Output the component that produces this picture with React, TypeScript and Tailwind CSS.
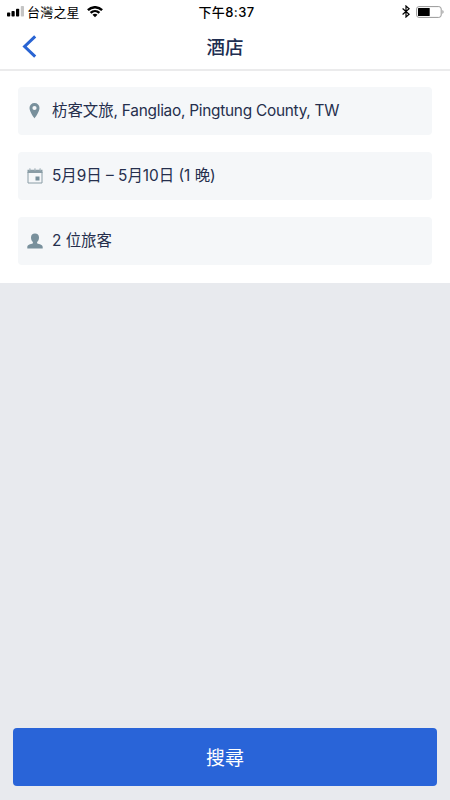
import type { ReactNode } from "react";

function StatusBar() {
  return (
    <div className="grid h-[23px] grid-cols-[1fr_auto_1fr] items-center pl-[7px] pr-[6px] text-black">
      <div className="flex items-center">
        <svg width="18" height="11" viewBox="0 0 18 11">
          <rect x="0" y="6.5" width="3.2" height="4" rx="0.8" />
          <rect x="4.5" y="5" width="3.2" height="5.5" rx="0.8" />
          <rect x="9" y="2.7" width="3.2" height="7.8" rx="0.8" />
          <rect x="13.8" y="0" width="3.2" height="10.5" rx="0.8" fill="#c4c4c4" />
        </svg>
        <span className="ml-[2px] pt-px text-[13px] leading-none tracking-[0.2px]">台灣之星</span>
        <svg className="ml-[7px]" width="16" height="12" viewBox="0 0 16 12" fill="none" stroke="#000" strokeWidth="2.4">
          <path d="M0.9 4.1C4.9 0.2 11.1 0.2 15.1 4.1" />
          <path d="M3.6 6.9C6.1 4.5 9.9 4.5 12.4 6.9" />
          <path d="M8 11.2L5.5 8.8C7 7.5 9 7.5 10.5 8.8Z" fill="#000" stroke="none" />
        </svg>
      </div>
      <span className="pl-[2px] pt-px text-[13px] font-medium leading-none tracking-[0.4px]">下午8:37</span>
      <div className="flex items-center justify-end">
        <svg width="8" height="13" viewBox="0 0 8 13" fill="none" stroke="#000" strokeWidth="1.2">
          <path d="M0.6 3.5L7.1 9.2L4 12V1L7.1 3.8L0.6 9.5" />
        </svg>
        <svg className="ml-[6px]" width="28" height="12" viewBox="0 0 28 12">
          <rect x="0.6" y="0.6" width="24.6" height="10.8" rx="2.4" fill="none" stroke="#999" strokeWidth="1" />
          <rect x="2" y="2" width="11.7" height="8" rx="0.6" />
          <path d="M26.4 4.1C28 4.6 28 7.4 26.4 7.9Z" fill="#999" />
        </svg>
      </div>
    </div>
  );
}

function Field({ icon, children }: { icon: ReactNode; children: ReactNode }) {
  return (
    <div className="flex h-12 items-center rounded bg-[#f5f7f9] pl-[9px]">
      <span className="flex w-4 shrink-0 justify-center">{icon}</span>
      <span className="ml-[9px] whitespace-nowrap text-[15.4px] leading-5 text-[#252f4d]">{children}</span>
    </div>
  );
}

export default function App() {
  return (
    <div className="flex h-[800px] w-[450px] flex-col bg-[#e8eaee] font-['Inter','Noto_Sans_CJK_TC',sans-serif]">
      <header className="h-[71px] border-b-2 border-[#ebebec] bg-white">
        <StatusBar />
        <div className="grid h-[46px] grid-cols-[1fr_auto_1fr] items-center">
          <button aria-label="返回" className="pl-[22px]">
            <svg width="15" height="23" viewBox="0 0 15 23" fill="none" stroke="#2964d3" strokeWidth="3">
              <path d="M13.2 1.3L2.6 11.5L13.2 21.7" />
            </svg>
          </button>
          <h1 className="pt-[2px] text-[18.5px] font-medium leading-none text-[#202d50]">酒店</h1>
        </div>
      </header>

      <main className="flex h-[212px] flex-col gap-[17px] bg-white px-[18px] pt-4">
        <Field
          icon={
            <svg className="mr-px" width="11" height="16" viewBox="0 0 11 16" fill="#78909c">
              <path fillRule="evenodd" d="M5.5 0A5 5 0 0 0 .5 5.1C.5 9 5.5 15.5 5.5 15.5S10.5 9 10.5 5.1A5 5 0 0 0 5.5 0ZM5.5 2.9A2.1 2.1 0 1 1 5.5 7.1A2.1 2.1 0 0 1 5.5 2.9Z" />
            </svg>
          }
        >
          枋客文旅<span className="tracking-[-0.26px]">, Fangliao, Pingtung County, TW</span>
        </Field>
        <Field
          icon={
            <svg width="16" height="16" viewBox="0 0 16 16">
              <path d="M1 4V15H15V4" fill="none" stroke="#8a9da6" strokeWidth="1" />
              <path d="M.5 1.8H2.2V.4H3.5V1.8H7.3V.4H8.6V1.8H12.5V.4H13.8V1.8H15.5V5H.5Z" fill="#8a9da6" />
              <path d="M2.8 .7V2.5M8 .7V2.5M13.2 .7V2.5" stroke="#f5f7f9" strokeWidth=".5" />
              <rect x="8.5" y="8.5" width="4" height="4" fill="#78909c" />
            </svg>
          }
        >
          5月9日 – 5月10日 (1 晚)
        </Field>
        <Field
          icon={
            <svg width="16" height="16" viewBox="0 0 16 16" fill="#78909c">
              <path d="M8 .4C5.5.4 4 2 4 4.4C4 6.4 4.8 8 5.9 9V10.2C5.7 11 .3 11 .3 14V15.4H15.7V14C15.7 11 10.3 11 10.1 10.2V9C11.2 8 12 6.4 12 4.4C12 2 10.5.4 8 .4Z" />
            </svg>
          }
        >
          2 位旅客
        </Field>
      </main>

      <div className="mt-auto px-[13px] pb-[14px]">
        <button className="flex h-[58px] w-full items-center justify-center rounded bg-[#2964d8] pt-[2px] text-[19px] leading-none text-white">
          搜尋
        </button>
      </div>
    </div>
  );
}
